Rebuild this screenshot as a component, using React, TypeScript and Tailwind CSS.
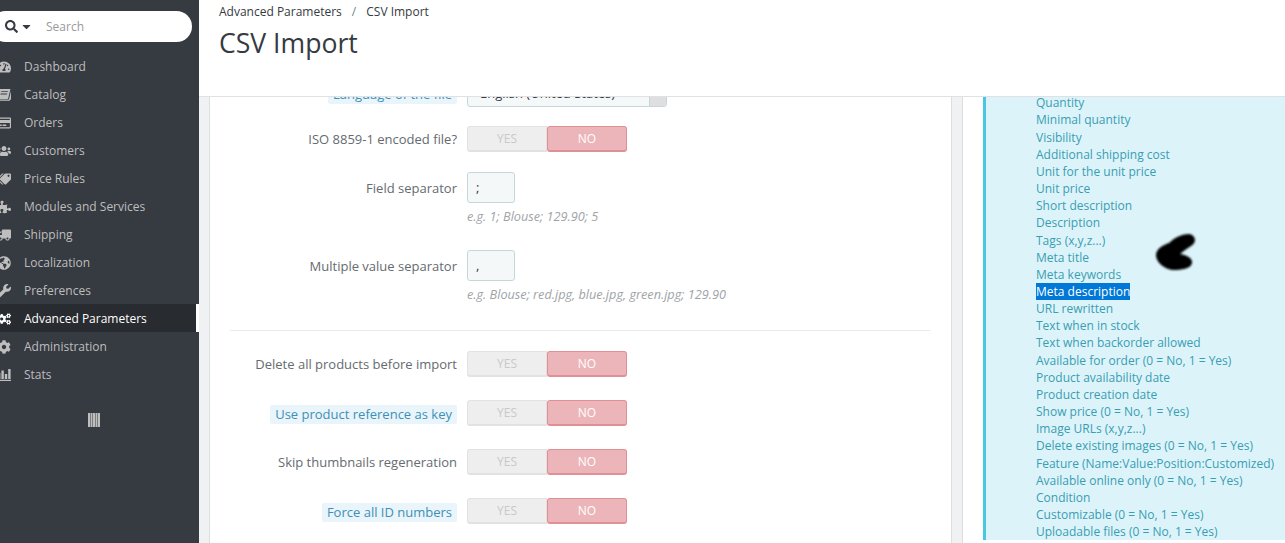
import type { ReactNode } from "react";
import {
  FaTachometerAlt, FaRegCreditCard, FaUsers, FaTags, FaPuzzlePiece,
  FaTruck, FaGlobeAmericas, FaWrench, FaCogs, FaCog, FaSearch, FaCaretDown,
} from "react-icons/fa";

function BookIcon({ className }: { className?: string }) {
  return (
    <svg viewBox="0 0 15 13" className={className} fill="currentColor">
      <path d="M3.6 0H14.4L12 10.2C11.8 11 11.2 11.4 10.4 11.4H2.2C1.7 11.4 1.6 11.9 2 12H11.2C12 12 12.6 11.6 12.9 10.9L15 2.2V10.6C14.6 12 13.5 13 12 13H2C0.7 13 0 12 0 10.8V9.4L2.2 1.2C2.4 0.5 2.9 0 3.6 0ZM4.6 2.4L4.3 3.4H11.4L11.7 2.4ZM3.9 5L3.6 6H10.7L11 5Z" fillRule="evenodd" />
    </svg>
  );
}

function StatsIcon({ className }: { className?: string }) {
  return (
    <svg viewBox="0 0 14 12" className={className} fill="currentColor">
      <rect x="0" y="10.8" width="14" height="1.2" />
      <rect x="1" y="4" width="2.4" height="6" />
      <rect x="4.4" y="1.5" width="2.4" height="8.5" />
      <rect x="7.8" y="5" width="2.4" height="5" />
      <rect x="11.2" y="0" width="2.4" height="10" />
    </svg>
  );
}

const NAV_ITEMS = [
  { icon: FaTachometerAlt, label: "Dashboard" },
  { icon: BookIcon, label: "Catalog" },
  { icon: FaRegCreditCard, label: "Orders" },
  { icon: FaUsers, label: "Customers" },
  { icon: FaTags, label: "Price Rules", flip: true },
  { icon: FaPuzzlePiece, label: "Modules and Services" },
  { icon: FaTruck, label: "Shipping", flip: true },
  { icon: FaGlobeAmericas, label: "Localization" },
  { icon: FaWrench, label: "Preferences" },
  { icon: FaCogs, label: "Advanced Parameters", active: true },
  { icon: FaCog, label: "Administration" },
  { icon: StatsIcon, label: "Stats" },
];

const FIELDS = [
  "Quantity", "Minimal quantity", "Visibility", "Additional shipping cost",
  "Unit for the unit price", "Unit price", "Short description", "Description",
  "Tags (x,y,z...)", "Meta title", "Meta keywords", "Meta description",
  "URL rewritten", "Text when in stock", "Text when backorder allowed",
  "Available for order (0 = No, 1 = Yes)", "Product availability date",
  "Product creation date", "Show price (0 = No, 1 = Yes)", "Image URLs (x,y,z...)",
  "Delete existing images (0 = No, 1 = Yes)", "Feature (Name:Value:Position:Customized)",
  "Available online only (0 = No, 1 = Yes)", "Condition",
  "Customizable (0 = No, 1 = Yes)", "Uploadable files (0 = No, 1 = Yes)",
];

function Sidebar() {
  return (
    <aside className="w-[199px] shrink-0 h-full bg-[#363a41] overflow-hidden">
      {/* Search */}
      <div className="pt-[11px] pr-[7px]">
        <div className="h-[31px] -ml-[10px] bg-white rounded-full flex items-center pl-[15px] text-[#363a41]">
          <FaSearch className="w-[13px] h-[13px]" />
          <FaCaretDown className="w-[13px] h-[13px] ml-[2px]" />
          <span className="ml-[13px] text-[12px] text-[#9a9a9a]">Search</span>
        </div>
      </div>

      {/* Nav */}
      <nav className="mt-[10px]">
        {NAV_ITEMS.map(({ icon: Icon, label, active, flip }) => (
          <div
            key={label}
            className={
              active
                ? "h-[28px] pt-[2px] flex items-center bg-[#282b30] text-white border-r-[3px] border-white"
                : "h-[28px] pt-[2px] flex items-center text-[#bebebe]"
            }
          >
            <Icon className={flip ? "w-[14px] h-[14px] -ml-[3px] shrink-0 -scale-x-100" : "w-[14px] h-[14px] -ml-[3px] shrink-0"} />
            <span className="ml-[13px] text-[12px]">{label}</span>
          </div>
        ))}
      </nav>

      <div className="mt-[25px] flex justify-center pr-[11px]">
        <svg width="12" height="14" viewBox="0 0 12 14" fill="#bebebe">
          <rect x="0" width="2" height="14" />
          <rect x="2.5" width="2" height="14" />
          <rect x="5" width="2" height="14" />
          <rect x="7.5" width="2" height="14" />
          <rect x="10" width="2" height="14" />
        </svg>
      </div>
    </aside>
  );
}

function Toggle() {
  return (
    <div className="w-[160px] h-[26px] flex text-[12px] leading-none">
      <div className="w-[80px] pt-[1px] flex items-center justify-center bg-[#eeeeee] text-[#c9c9c9] border border-[#e2e2e2] border-b-2 rounded-l-[3px]">
        YES
      </div>
      <div className="w-[80px] pt-[1px] flex items-center justify-center bg-[#ecb5b9] text-white border border-[#e08f95] border-b-2 rounded-[3px]">
        NO
      </div>
    </div>
  );
}

function FieldInput({ value }: { value: string }) {
  return (
    <div className="w-[48px] h-[31px] flex items-center pl-[8px] bg-[#f5f8f9] border border-[#c7d6db] rounded-[3px] text-[#363a41]">
      {value}
    </div>
  );
}

function Row({ label, tip, className, children }: { label: string; tip?: boolean; className: string; children: ReactNode }) {
  return (
    <div className={`flex items-center ${className}`}>
      <div className="w-[247px] shrink-0 pt-[2px] flex justify-end">
        <span className={tip ? "px-[5px] bg-[#e9f5fb] text-[#3e8fb5] rounded-[2px] leading-[19px]" : "text-[#666b70]"}>{label}</span>
      </div>
      <div className="ml-[10px]">{children}</div>
    </div>
  );
}

function Help({ children }: { children: ReactNode }) {
  return <p className="ml-[257px] mt-[5px] h-[17px] leading-[17px] text-[12.7px] italic text-[#a0a4a8]">{children}</p>;
}

function ImportForm() {
  return (
    <section className="w-[743px] shrink-0 ml-[10px] bg-white border-x border-[#dcdfe1] h-full overflow-hidden">
      <div className="-mt-[17px] text-[13px]">
        <Row label="Language of the file" tip className="h-[27px]">
          <div className="w-[200px] h-[27px] flex items-center justify-between pl-[12px] bg-[#f5f8f9] border border-[#c7d6db] rounded-[3px] text-[#363a41] overflow-hidden">
            <span>English (United States)</span>
            <span className="w-[17px] h-full bg-[#dfdfdf] border-l border-[#c7d6db]" />
          </div>
        </Row>
        <Row label="ISO 8859-1 encoded file?" className="mt-[19px]"><Toggle /></Row>
        <Row label="Field separator" className="mt-[20px]"><FieldInput value=";" /></Row>
        <Help>e.g. 1; Blouse; 129.90; 5</Help>
        <Row label="Multiple value separator" className="mt-[25px]"><FieldInput value="," /></Row>
        <Help>e.g. Blouse; red.jpg, blue.jpg, green.jpg; 129.90</Help>
        <div className="mx-[20px] mt-[27px] border-t border-[#eaedee]" />
        <Row label="Delete all products before import" className="mt-[20px]"><Toggle /></Row>
        <Row label="Use product reference as key" tip className="mt-[23px]"><Toggle /></Row>
        <Row label="Skip thumbnails regeneration" className="mt-[23px]"><Toggle /></Row>
        <Row label="Force all ID numbers" tip className="mt-[23px]"><Toggle /></Row>
      </div>
    </section>
  );
}

function FieldsPanel() {
  return (
    <section className="relative flex-1 ml-[10px] bg-white border-l border-[#dcdfe1] pl-[20px] h-full overflow-hidden">
      <div className="h-full bg-[#dcf4f9] border-l-[3px] border-[#4ac7e0] pl-[50px]">
        <ul className="-mt-[2.75px] text-[12px] leading-[17.15px] text-[#3a9db3]">
          {FIELDS.map((f) => (
            <li key={f}>
              {f === "Meta description" ? <span className="bg-[#0078d7] text-white">{f}</span> : f}
            </li>
          ))}
        </ul>
      </div>
      {/* scribble over the list */}
      <svg className="absolute left-[178px] top-[128px]" width="70" height="60" viewBox="0 0 70 60">
        <defs>
          <filter id="soft" filterUnits="userSpaceOnUse" x="0" y="0" width="70" height="60">
            <feGaussianBlur stdDeviation="1.2" />
          </filter>
        </defs>
        <path
          d="M15 30 C15 24 22 20 28 18 C34 12 42 9 48 9 C55 10 56 18 50 21 C46 24 42 26 39 29 C45 30 52 33 51 38 C50 44 40 45 33 45 C25 45 15 38 15 30 Z"
          fill="#000"
          filter="url(#soft)"
        />
      </svg>
    </section>
  );
}

export default function App() {
  return (
    <div className="w-[1285px] h-[543px] flex overflow-hidden bg-white font-['Open_Sans',sans-serif]">
      <Sidebar />
      <div className="flex-1 min-w-0 flex flex-col">
        <header className="h-[97px] shrink-0 bg-white border-b border-[#dfe1e3] pl-[20px] pt-[4px] text-[#363a41]">
          <div className="flex text-[12px] leading-[16px]">
            <span>Advanced Parameters</span>
            <span className="mx-[10px] text-[#6c868e]">/</span>
            <span>CSV Import</span>
          </div>
          <h1 className="mt-[5px] text-[26.6px] leading-[36px]">CSV Import</h1>
        </header>
        <main className="flex-1 min-h-0 flex bg-[#eff1f2]">
          <ImportForm />
          <FieldsPanel />
        </main>
      </div>
    </div>
  );
}
